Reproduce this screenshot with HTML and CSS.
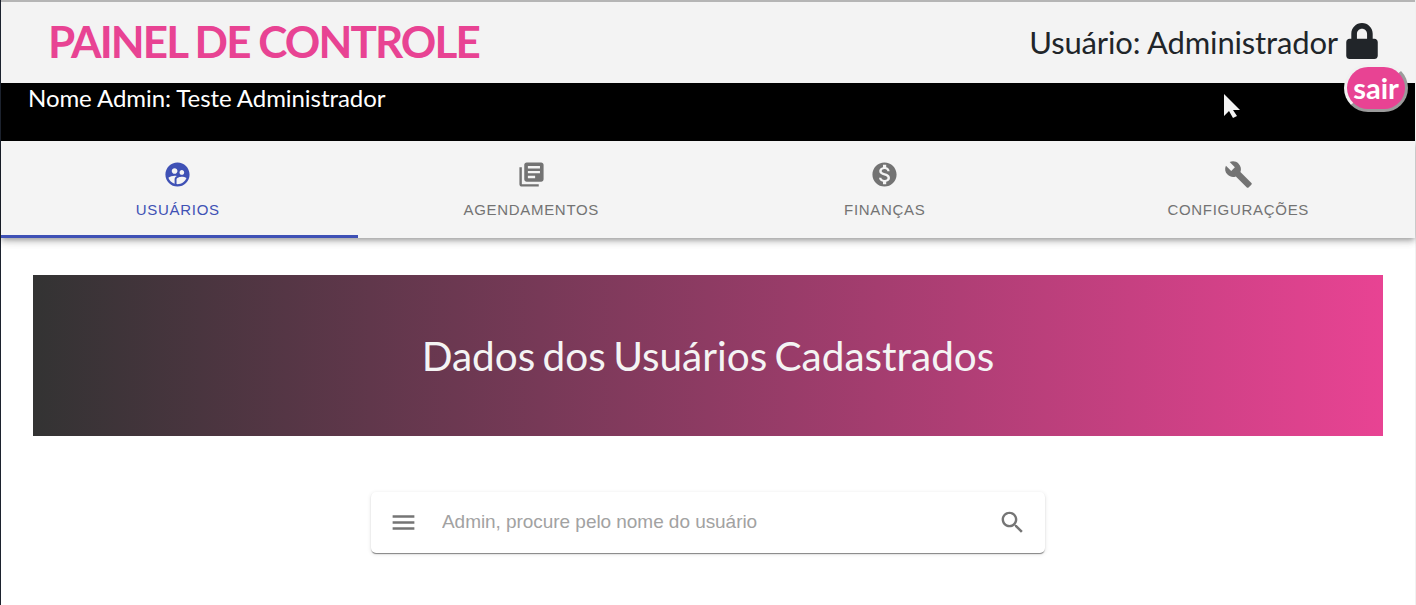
FILE: index.html
```html
<!DOCTYPE html>
<html lang="pt-BR">
<head>
<meta charset="utf-8">
<title>Painel de Controle</title>
<link rel="stylesheet" href="styles.css">
</head>
<body>
<div class="page">
  <header class="header">
    <h1 class="title">PAINEL DE CONTROLE</h1>
    <div class="account">
      <span class="account-name">Usuário: Administrador</span>
      <svg class="lock" viewBox="0 0 448 512"><path d="M400 224h-24v-72C376 68.200 307.800 0 224 0S72 68.200 72 152v72H48c-26.500 0-48 21.500-48 48v192c0 26.500 21.500 48 48 48h352c26.500 0 48-21.500 48-48V272c0-26.500-21.500-48-48-48zm-104 0H152v-72c0-39.700 32.300-72 72-72s72 32.300 72 72v72z"/></svg>
    </div>
    <button class="logout">sair</button>
  </header>
  <div class="admin-bar"><span class="admin-name">Nome Admin: Teste Administrador</span></div>
  <nav class="tabs">
    <a class="tab active">
      <svg class="icon" viewBox="0 0 24 24"><path d="M11.990 2c-5.520 0-10 4.480-10 10s4.480 10 10 10 10-4.480 10-10-4.480-10-10-10zm3.610 6.340c1.070 0 1.930.86 1.930 1.930 0 1.070-.86 1.930-1.930 1.930-1.070 0-1.930-.86-1.930-1.930-.01-1.070.86-1.930 1.930-1.930zm-6-1.580c1.300 0 2.360 1.060 2.360 2.360 0 1.300-1.060 2.360-2.360 2.360s-2.360-1.060-2.360-2.360c0-1.310 1.050-2.360 2.360-2.360zm0 9.130v3.750c-2.400-.75-4.300-2.600-5.140-4.960 1.050-1.120 3.670-1.690 5.140-1.690.53 0 1.200.08 1.900.22-1.640.87-1.900 2.020-1.900 2.680zM11.990 20c-.27 0-.53-.01-.79-.04v-4.070c0-1.420 2.940-2.130 4.400-2.130 1.070 0 2.920.39 3.840 1.150-1.170 2.970-4.060 5.090-7.450 5.090z"/></svg>
      <span class="label">USUÁRIOS</span>
    </a>
    <a class="tab">
      <svg class="icon" viewBox="0 0 24 24"><path d="M4 6H2v14c0 1.100.9 2 2 2h14v-2H4V6zm16-4H8c-1.100 0-2 .9-2 2v12c0 1.100.9 2 2 2h12c1.100 0 2-.9 2-2V4c0-1.100-.9-2-2-2zm-1 9H9V9h10v2zm-4 4H9v-2h6v2zm4-8H9V5h10v2z"/></svg>
      <span class="label">AGENDAMENTOS</span>
    </a>
    <a class="tab">
      <svg class="icon" viewBox="0 0 24 24"><path d="M12 2C6.480 2 2 6.480 2 12s4.480 10 10 10 10-4.480 10-10S17.520 2 12 2zm1.410 16.090V20h-2.670v-1.930c-1.710-.36-3.160-1.460-3.270-3.400h1.960c.1 1.050.82 1.870 2.650 1.870 1.960 0 2.400-.98 2.400-1.590 0-.83-.44-1.610-2.670-2.140-2.480-.6-4.180-1.620-4.180-3.670 0-1.720 1.390-2.840 3.110-3.210V4h2.670v1.950c1.860.45 2.790 1.860 2.850 3.390H14.300c-.05-1.110-.64-1.870-2.220-1.870-1.500 0-2.400.68-2.400 1.640 0 .84.65 1.390 2.670 1.910s4.180 1.390 4.180 3.910c-.01 1.830-1.380 2.830-3.120 3.160z"/></svg>
      <span class="label">FINANÇAS</span>
    </a>
    <a class="tab">
      <svg class="icon" viewBox="0 0 24 24"><path d="M22.700 19l-9.100-9.100c.9-2.300.4-5-1.500-6.900-2-2-5-2.400-7.400-1.300L9 6 6 9 1.600 4.700C.4 7.100.9 10.100 2.900 12.100c1.900 1.900 4.600 2.400 6.900 1.500l9.100 9.100c.4.4 1 .4 1.400 0l2.300-2.300c.5-.4.5-1.100.1-1.400z"/></svg>
      <span class="label">CONFIGURAÇÕES</span>
    </a>
  </nav>
  <main class="content">
    <section class="banner"><h2 class="banner-title">Dados dos Usuários Cadastrados</h2></section>
    <form class="search">
      <svg class="icon" viewBox="0 0 24 24"><path d="M3 18h18v-2H3v2zm0-5h18v-2H3v2zm0-7v2h18V6H3z"/></svg>
      <input class="search-input" placeholder="Admin, procure pelo nome do usuário">
      <svg class="icon" viewBox="0 0 24 24"><path d="M15.500 14h-.79l-.28-.27C15.410 12.590 16 11.110 16 9.500 16 5.910 13.090 3 9.500 3S3 5.910 3 9.500 5.910 16 9.500 16c1.610 0 3.090-.59 4.230-1.570l.27.28v.79l5 4.990L20.490 19l-4.990-5zm-6 0C7.010 14 5 11.990 5 9.500S7.010 5 9.500 5 14 7.010 14 9.500 11.990 14 9.500 14z"/></svg>
    </form>
  </main>
  <svg class="cursor" viewBox="0 0 17 26"><path d="M1 1v22l5-5 4 7 4-2-4-6h7z"/></svg>
</div>
</body>
</html>
```
FILE: styles.css
```css
* { box-sizing: border-box; }
body { margin: 0; background: #fff; font-family: Lato, sans-serif; overflow: hidden; }
.page {
  position: relative;
  height: 605px;
  border-left: 1px solid #1c222e;
  border-right: 1px solid #f1f1f1;
}
.header {
  position: relative;
  display: flex;
  justify-content: space-between;
  height: 83px;
  padding: 0 37px 0 47px;
  background: #f3f3f3;
  border-top: 2px solid #b5b5b5;
}
.title {
  margin: 13px 0 0;
  color: #e84393;
  font-size: 44px;
  line-height: 52px;
  font-weight: 700;
  letter-spacing: -1.920px;
  white-space: nowrap;
}
.account { display: flex; align-items: flex-start; color: #212529; }
.account-name { margin-top: 20px; font-size: 31px; line-height: 40px; letter-spacing: -.15px; white-space: nowrap; }
.lock { width: 32px; height: 36px; margin: 21px 0 0 8px; fill: #212529; }
.logout {
  position: absolute;
  z-index: 2;
  top: 62px;
  right: 7px;
  width: 64px;
  height: 48px;
  padding: 0;
  color: #fff;
  background: #e84393;
  border: 3px solid;
  border-color: #f1f1f1 #9b9b9b #9b9b9b #f1f1f1;
  border-radius: 24px;
  font: 700 29px/36px Lato, sans-serif;
}
.admin-bar { height: 58px; padding: 0 27px; background: #000; color: #fff; }
.admin-name { display: block; font-size: 24px; line-height: 30px; letter-spacing: -.06px; white-space: nowrap; }
.tabs {
  display: flex;
  height: 97px;
  background: #f4f4f4;
  box-shadow: 0 2px 5px -1px rgba(0,0,0,.3), 0 5px 6px rgba(0,0,0,.12), 0 1px 12px rgba(0,0,0,.08);
}
.tab {
  position: relative;
  display: flex;
  flex: 1;
  flex-direction: column;
  align-items: center;
  padding-top: 19px;
  color: #737373;
  font: 15px/20px "Liberation Sans", Arial, sans-serif;
}
.tab.active { color: #3f51b5; }
.tab.active::after {
  content: "";
  position: absolute;
  left: 0;
  right: -3px;
  bottom: 0;
  height: 3px;
  background: #3f51b5;
}
.icon { flex: none; width: 29px; height: 29px; fill: currentColor; }
.label { margin-top: 11px; letter-spacing: .7px; }
.content { display: flex; flex-direction: column; align-items: center; padding: 37px 32px 0; }
.banner {
  display: flex;
  align-items: center;
  justify-content: center;
  width: 100%;
  height: 161px;
  background: linear-gradient(to right, #333, #e84393);
}
.banner-title { margin: 0; color: #f4f4f4; font-size: 40.500px; line-height: 48px; font-weight: 400; word-spacing: -3px; white-space: nowrap; }
.search {
  display: flex;
  align-items: center;
  width: 674px;
  height: 61px;
  margin-top: 56px;
  padding: 0 18px;
  color: #757575;
  background: #fff;
  border-radius: 5px;
  box-shadow: 0 2px 1px -1px rgba(0,0,0,.3), 0 1px 1px rgba(0,0,0,.2), 0 1px 4px rgba(0,0,0,.12);
}
.search-input {
  flex: 1;
  min-width: 0;
  margin-left: 24px;
  padding: 0 0 2px;
  border: 0;
  outline: 0;
  background: none;
  font: 19px/24px "Liberation Sans", Arial, sans-serif;
  letter-spacing: -.05px;
}
.search-input::placeholder { color: #a2a2a2; opacity: 1; }
.cursor { position: absolute; left: 1222px; top: 93px; width: 17px; height: 26px; fill: #f3f3f3; }
```
